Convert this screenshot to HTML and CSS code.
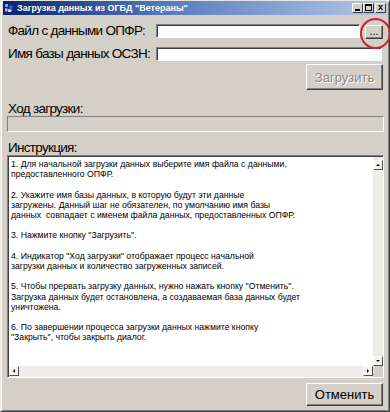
FILE: index.html
```html
<!DOCTYPE html>
<html lang="ru">
<head>
  <meta charset="UTF-8" />
  <title>Загрузка данных из ОГБД "Ветераны"</title>
  <link rel="stylesheet" href="styles.css">
</head>
<body>
  <div class="window">
    <div class="titlebar">
      <svg class="title-icon" width="10" height="10" viewBox="0 0 10 10">
        <path d="M1 1h3v3h-3z" fill="#6fa0ff"/>
        <path d="M5 2l4 1-1 4-3-1z" fill="#2a5bd8"/>
        <path d="M1 5l3 1-1 3-2-1z" fill="#9cc0ff"/>
        <path d="M4 6l4 1-1 2-3 0z" fill="#c8dcff"/>
      </svg>
      <span class="title-text">Загрузка данных из ОГБД "Ветераны"</span>
      <div class="caption-buttons">
        <span class="cap-btn"><i class="cap-min"></i></span>
        <span class="cap-btn"><i class="cap-max"></i></span>
        <span class="cap-btn cap-close">x</span>
      </div>
    </div>

    <div class="content">
      <div class="form-row">
        <label class="lbl">Файл с данными ОПФР:</label>
        <div class="field">
          <div class="input input-file"></div>
          <span class="browse-wrap"><span class="btn btn-browse">...</span></span>
        </div>
      </div>
      <div class="form-row">
        <label class="lbl">Имя базы данных ОСЗН:</label>
        <div class="field">
          <div class="input input-db"></div>
        </div>
      </div>

      <div class="actions">
        <span class="btn btn-big btn-disabled">Загрузить</span>
      </div>

      <div class="lbl section-lbl">Ход загрузки:</div>
      <div class="progress"></div>

      <div class="lbl section-lbl lbl-instr">Инструкция:</div>
      <div class="memo">
        <div class="memo-text">1. Для начальной загрузки данных выберите имя файла с данными,
предоставленного ОПФР.

2. Укажите имя базы данных, в которую будут эти данные
загружены. Данный шаг не обязателен, по умолчанию имя базы
данных  совпадает с именем файла данных, предоставленных ОПФР.

3. Нажмите кнопку "Загрузить".

4. Индикатор "Ход загрузки" отображает процесс начальной
загрузки данных и количество загруженных записей.

5. Чтобы прервать загрузку данных, нужно нажать кнопку "Отменить".
Загрузка данных будет остановлена, а создаваемая база данных будет
уничтожена.

6. По завершении процесса загрузки данных нажмите кнопку
"Закрыть", чтобы закрыть диалог.</div>
        <div class="vscroll">
          <span class="sb-btn"><i class="arr arr-up"></i></span>
          <span class="sb-track"></span>
          <span class="sb-btn"><i class="arr arr-down"></i></span>
        </div>
        <div class="hscroll">
          <span class="sb-btn"><i class="arr arr-left"></i></span>
          <span class="sb-track"></span>
          <span class="sb-btn"><i class="arr arr-right"></i></span>
        </div>
        <div class="sb-corner"></div>
      </div>

      <div class="actions actions-bottom">
        <span class="btn btn-big">Отменить</span>
      </div>
    </div>
  </div>
</body>
</html>
```

FILE: styles.css
```css
* {
  box-sizing: border-box;
  margin: 0;
  padding: 0;
}
body {
  width: 390px;
  height: 412px;
  overflow: hidden;
  font-family: 'Liberation Sans', Arial, sans-serif;
  background: #d4d0c8;
}
.window {
  height: 412px;
  background: #d4d0c8;
  border: 1px solid;
  border-color: #e8e6e0 #404040 #404040 #e8e6e0;
  box-shadow: inset 1px 1px #ffffff, inset -1px -1px #808080;
  padding: 0 2px 2px 2px;
}

/* title bar */
.titlebar {
  height: 14px;
  display: flex;
  align-items: center;
  background: linear-gradient(to right, #0a246a, #5a7fc0 45%, #b4c8e6);
  padding-left: 1px;
}
.title-icon {
  margin-right: 3px;
}
.title-text {
  flex: 1;
  color: #fff;
  font-size: 9px;
  font-weight: bold;
  white-space: nowrap;
}
.caption-buttons {
  display: flex;
  align-items: center;
  padding-right: 1px;
}
.cap-btn {
  width: 11px;
  height: 10px;
  background: #d4d0c8;
  border: 1px solid;
  border-color: #fff #404040 #404040 #fff;
  position: relative;
  font-size: 9px;
  line-height: 7px;
  text-align: center;
  color: #000;
}
.cap-close {
  margin-left: 1px;
  font-weight: bold;
}
.cap-min {
  position: absolute;
  left: 2px;
  bottom: 1px;
  width: 5px;
  height: 2px;
  background: #000;
}
.cap-max {
  position: absolute;
  left: 1px;
  top: 0;
  width: 7px;
  height: 7px;
  border: 1px solid #000;
  border-top-width: 2px;
}

/* content */
.content {
  padding: 7px 3px 0 4px;
}
.lbl {
  font-size: 13.5px;
  letter-spacing: -0.7px;
  line-height: 16px;
  color: #000;
  padding-left: 1px;
  white-space: nowrap;
}
.form-row {
  display: grid;
  grid-template-columns: 149px 1fr;
  align-items: center;
  height: 14px;
  margin-bottom: 9px;
}
.form-row .lbl {
  padding-top: 1px;
}
.field {
  display: flex;
  align-items: center;
  gap: 5px;
}
.input {
  flex: 1;
  height: 14px;
  background: #fff;
  border: 1px solid;
  border-color: #808080 #ffffff #ffffff #808080;
  box-shadow: inset 1px 1px #404040;
}
.input-db {
  margin-right: 2px;
}
.browse-wrap {
  position: relative;
  margin-right: 1px;
  margin-top: 2px;
}
.browse-wrap::after {
  content: '';
  position: absolute;
  left: -5px;
  top: -7px;
  width: 27px;
  height: 27px;
  border: 2px solid #d0202c;
  border-radius: 50%;
}
.btn {
  display: flex;
  align-items: center;
  justify-content: center;
  background: #d4d0c8;
  border: 1px solid;
  border-color: #ffffff #404040 #404040 #ffffff;
  box-shadow: inset -1px -1px #808080;
  color: #000;
}
.btn-browse {
  width: 18px;
  height: 14px;
  font-size: 11px;
  line-height: 10px;
  align-items: flex-end;
  padding-bottom: 2px;
}
.btn-big {
  width: 77px;
  font-size: 13px;
}
.btn-disabled {
  color: #8c8a84;
  text-shadow: 1px 1px #fff;
}
.actions {
  display: flex;
  justify-content: flex-end;
  margin-top: -4px;
  margin-right: 1px;
}
.actions .btn-big {
  height: 26px;
}
.section-lbl {
  margin-top: 11px;
  margin-bottom: -1px;
}
.lbl-instr {
  margin-top: 8px;
}
.progress {
  height: 16px;
  border: 1px solid;
  border-color: #808080 #ffffff #ffffff #808080;
  background: #d4d0c8;
}

/* memo with scrollbars */
.memo {
  height: 223px;
  display: grid;
  grid-template-columns: 1fr 10px;
  grid-template-rows: 1fr 11px;
  background: #fff;
  border: 1px solid;
  border-color: #808080 #ffffff #ffffff #808080;
  box-shadow: inset 1px 1px #404040;
  padding: 1px 0 0 1px;
}
.memo-text {
  white-space: pre;
  overflow: hidden;
  font-size: 8.7px;
  line-height: 10.2px;
  color: #000;
  padding: 2px 0 0 2px;
}
.vscroll, .hscroll {
  display: flex;
  background: #efede8;
}
.vscroll {
  flex-direction: column;
  padding-top: 3px;
}
.sb-track {
  flex: 1;
}
.sb-btn {
  width: 10px;
  height: 10px;
  background: #f4f3ef;
  border: 1px solid;
  border-color: #ffffff #505050 #505050 #ffffff;
  display: flex;
  align-items: center;
  justify-content: center;
}
.arr {
  width: 0;
  height: 0;
  border: 2px solid transparent;
}
.arr-up { border-bottom-color: #000; margin-top: -2px; }
.arr-down { border-top-color: #000; margin-top: 2px; }
.arr-left { border-right-color: #000; margin-left: -2px; }
.arr-right { border-left-color: #000; margin-left: 2px; }
.sb-corner {
  background: #d4d0c8;
}
.actions-bottom {
  margin-top: 5px;
}
.actions-bottom .btn-big {
  height: 23px;
}
```
